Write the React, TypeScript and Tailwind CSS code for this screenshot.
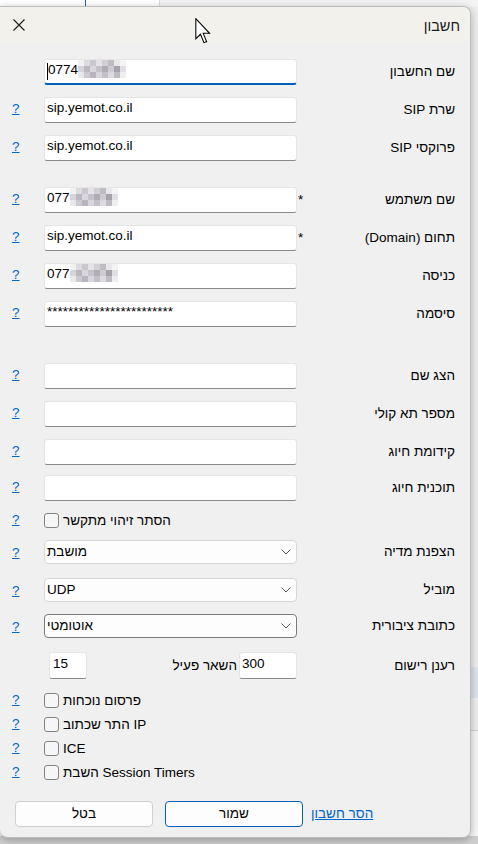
import React from "react";

const FONT = { fontFamily: '"Liberation Sans", "Open Sans", "DejaVu Sans", sans-serif' };

function Mosaic() {
  const colors = [
    "#f2f2f3", "#dcdadf", "#cbc7cf", "#e4e2e6", "#d2cfd5", "#bfbbc3", "#e8e7ea", "#f4f4f5",
    "#d6d3d9", "#bcb8c0", "#d9d6dc", "#c6c2ca", "#b2adb5", "#cfcbd2", "#a6a2ab", "#e1dfe3",
    "#e9e8eb", "#cdc9d0", "#b9b4bd", "#d8d5db", "#c4c0c8", "#dedbe0", "#bfbcc4", "#eeedef",
  ];
  return (
    <div className="grid grid-cols-[repeat(8,6px)] grid-rows-[repeat(3,6px)]">
      {colors.map((c, i) => (
        <div key={i} style={{ background: c }} />
      ))}
    </div>
  );
}

function Field({
  children,
  focused = false,
  w = "w-[253px]",
  h = "h-[26px]",
}: {
  children?: React.ReactNode;
  focused?: boolean;
  w?: string;
  h?: string;
}) {
  return (
    <div
      className={`${w} ${h} bg-white rounded-[3px] border border-[#e5e5e5] ${
        focused ? "border-b-2 border-b-[#005fb8]" : "border-b-[#8a8a8a]"
      } px-[2px] pt-[2px] leading-[16px] text-[13.5px] text-black overflow-hidden flex items-start`}
    >
      {children}
    </div>
  );
}

function Select({ value, dark = false }: { value: string; dark?: boolean }) {
  return (
    <div
      className={`w-[253px] h-[24px] rounded-[4px] border ${
        dark ? "border-[#7a7a7a]" : "border-[#d6d6d6]"
      } bg-[#fdfdfd] flex items-center justify-between pl-[2px] pr-[5px] text-[13.5px] leading-[16px] text-black`}
    >
      <span>{value}</span>
      <svg width="10" height="6" viewBox="0 0 10 6">
        <polyline points="0.5,0.5 5,5 9.5,0.5" fill="none" stroke="#5a5a5a" strokeWidth="1" />
      </svg>
    </div>
  );
}

function Help({ cls }: { cls: string }) {
  return (
    <div className={`w-[44px] shrink-0 pl-[12px] leading-[16px] ${cls}`}>
      <span className="text-[#0066cc] underline text-[13.5px]">?</span>
    </div>
  );
}

function Row({
  mt,
  h,
  helpCls,
  label,
  star = false,
  help = true,
  children,
}: {
  mt: string;
  h: string;
  helpCls: string;
  label: string;
  star?: boolean;
  help?: boolean;
  children: React.ReactNode;
}) {
  return (
    <div className={`flex ${mt} ${h}`}>
      {help ? <Help cls={helpCls} /> : <div className="w-[44px] shrink-0" />}
      <div className="w-[253px] shrink-0">{children}</div>
      <div className="w-[13px] shrink-0 self-center pl-[1px] text-[13.5px] leading-[16px] text-black">
        {star ? "*" : ""}
      </div>
      <div dir="rtl" className="flex-1 self-center pr-[15px] text-[13.5px] leading-[16px] text-black whitespace-nowrap">
        {label}
      </div>
    </div>
  );
}

function Check({ mt, label }: { mt: string; label: string }) {
  return (
    <div className={`flex ${mt} h-[15px]`}>
      <Help cls="-mt-[2px]" />
      <div className="flex items-center">
        <div className="w-[15px] h-[15px] rounded-[3px] border border-[#858585] bg-[#f6f6f6] shrink-0" />
        <span dir="ltr" className="ml-[4px] text-[13.5px] leading-[16px] text-black whitespace-nowrap">
          {label}
        </span>
      </div>
    </div>
  );
}

export default function App() {
  return (
    <div className="relative w-[478px] h-[844px] overflow-hidden bg-[#eeeeee]" style={FONT}>
      {/* background window behind */}
      <div className="absolute left-0 top-0 w-[160px] h-[7px] bg-white border-r border-[#dcdcdc]" />
      <div className="absolute left-[160px] top-0 right-0 h-[7px] bg-[#f4f4f4]" />
      <div className="absolute left-[85px] top-0 w-[1px] h-[6px] bg-[#2f5fb5]" />
      <div className="absolute right-0 top-[667px] w-[10px] h-[31px] bg-[#dde4eb]" />
      <div className="absolute right-0 top-[730px] w-[10px] h-[1px] bg-[#d2d2d2]" />
      <div className="absolute right-0 top-[731px] w-[10px] h-[113px] bg-[#f6f6f6]" />
      <div className="absolute left-0 right-0 bottom-0 h-[8px] bg-[#cfcfcf]" />

      {/* dialog */}
      <div className="relative mt-[6px] w-[471px] h-[832px] bg-[#f0f0f0] border-t border-r border-b border-[#bcbcbc] rounded-tr-[8px] rounded-br-[8px] rounded-bl-[8px] shadow-[0_2px_8px_rgba(0,0,0,0.28)] flex flex-col overflow-hidden">
        {/* title bar */}
        <div className="h-[36px] bg-[#f3f1ec] flex items-center justify-between pl-[13px] pr-[10px] shrink-0">
          <svg width="12" height="12" viewBox="0 0 12 12">
            <path d="M0.5 0.5 L11.5 11.5 M11.5 0.5 L0.5 11.5" stroke="#1b1b1b" strokeWidth="1.1" />
          </svg>
          <span dir="rtl" className="text-[14.5px] text-[#1a1a1a] leading-[18px] mt-[1px]">חשבון</span>
        </div>

        {/* body */}
        <div className="flex flex-col pt-[16px] flex-1">
          <Row mt="mt-0" h="h-[26px]" helpCls="pt-[3px]" label="שם החשבון" help={false}>
            <Field focused>
              <span className="inline-block w-[1px] h-[17px] bg-black mt-[1px] -mr-[1px]" />
              <span className="ml-[1px]">0774</span>
              <div className="-mt-[2px]">
                <Mosaic />
              </div>
            </Field>
          </Row>
          <Row mt="mt-[12px]" h="h-[26px]" helpCls="pt-[3px]" label="שרת SIP">
            <Field>sip.yemot.co.il</Field>
          </Row>
          <Row mt="mt-[12px]" h="h-[26px]" helpCls="pt-[3px]" label="פרוקסי SIP">
            <Field>sip.yemot.co.il</Field>
          </Row>
          <Row mt="mt-[26px]" h="h-[26px]" helpCls="pt-[3px]" label="שם משתמש" star>
            <Field>
              <span>077</span>
              <div className="-mt-[2px]">
                <Mosaic />
              </div>
            </Field>
          </Row>
          <Row mt="mt-[12px]" h="h-[26px]" helpCls="pt-[3px]" label="תחום (Domain)" star>
            <Field>sip.yemot.co.il</Field>
          </Row>
          <Row mt="mt-[12px]" h="h-[26px]" helpCls="pt-[3px]" label="כניסה">
            <Field>
              <span>077</span>
              <div className="-mt-[2px]">
                <Mosaic />
              </div>
            </Field>
          </Row>
          <Row mt="mt-[12px]" h="h-[26px]" helpCls="pt-[3px]" label="סיסמה">
            <Field>************************</Field>
          </Row>
          <Row mt="mt-[36px]" h="h-[26px]" helpCls="pt-[3px]" label="הצג שם">
            <Field />
          </Row>
          <Row mt="mt-[12px]" h="h-[26px]" helpCls="pt-[3px]" label="מספר תא קולי">
            <Field />
          </Row>
          <Row mt="mt-[12px]" h="h-[26px]" helpCls="pt-[3px]" label="קידומת חיוג">
            <Field />
          </Row>
          <Row mt="mt-[10px]" h="h-[26px]" helpCls="pt-[3px]" label="תוכנית חיוג">
            <Field />
          </Row>

          <Check mt="mt-[12px]" label="הסתר זיהוי מתקשר" />

          <Row mt="mt-[12px]" h="h-[24px]" helpCls="pt-[4px]" label="הצפנת מדיה">
            <Select value="מושבת" />
          </Row>
          <Row mt="mt-[14px]" h="h-[24px]" helpCls="pt-[4px]" label="מוביל">
            <Select value="UDP" />
          </Row>
          <Row mt="mt-[12px]" h="h-[24px]" helpCls="pt-[4px]" label="כתובת ציבורית">
            <Select value="אוטומטי" dark />
          </Row>

          <Row mt="mt-[14px]" h="h-[27px]" helpCls="pt-[3px]" label="רענן רישום" help={false}>
            <div className="flex items-center h-[27px]">
              <div className="ml-[5px]">
                <Field w="w-[38px]" h="h-[27px]">
                  <span className="pl-[1px] pt-[1px]">15</span>
                </Field>
              </div>
              <div dir="rtl" className="flex-1 text-right pl-[2px] pr-[2px] text-[13.5px] leading-[16px] text-black whitespace-nowrap">
                השאר פעיל
              </div>
              <Field w="w-[58px]" h="h-[27px]">
                <span className="pt-[1px]">300</span>
              </Field>
            </div>
          </Row>

          <Check mt="mt-[14px]" label="פרסום נוכחות" />
          <Check mt="mt-[9px]" label="התר שכתוב IP" />
          <Check mt="mt-[9px]" label="ICE" />
          <Check mt="mt-[9px]" label="השבת Session Timers" />

          {/* buttons */}
          <div className="flex items-center mt-[21px] pl-[15px]">
            <button className="w-[138px] h-[26px] rounded-[4px] border border-[#d0d0d0] bg-[#fdfdfd] text-[13.5px] text-black">
              בטל
            </button>
            <button className="ml-[12px] w-[138px] h-[26px] rounded-[4px] border border-[#005fb8] bg-[#fdfdfd] text-[13.5px] text-black">
              שמור
            </button>
            <a className="ml-[8px] text-[13.5px] text-[#0066cc] underline whitespace-nowrap" dir="rtl">
              הסר חשבון
            </a>
          </div>
        </div>
      </div>

      {/* mouse cursor */}
      <svg className="absolute left-[195px] top-[18px]" width="17" height="26" viewBox="0 0 12.5 19.5">
        <path
          d="M0.5 0.5 L0.5 15.5 L4 12.2 L6.6 18.5 L8.6 17.7 L6 11.5 L10.8 11.5 Z"
          fill="#ffffff"
          stroke="#000000"
          strokeWidth="0.8"
          strokeLinejoin="miter"
        />
      </svg>
    </div>
  );
}
